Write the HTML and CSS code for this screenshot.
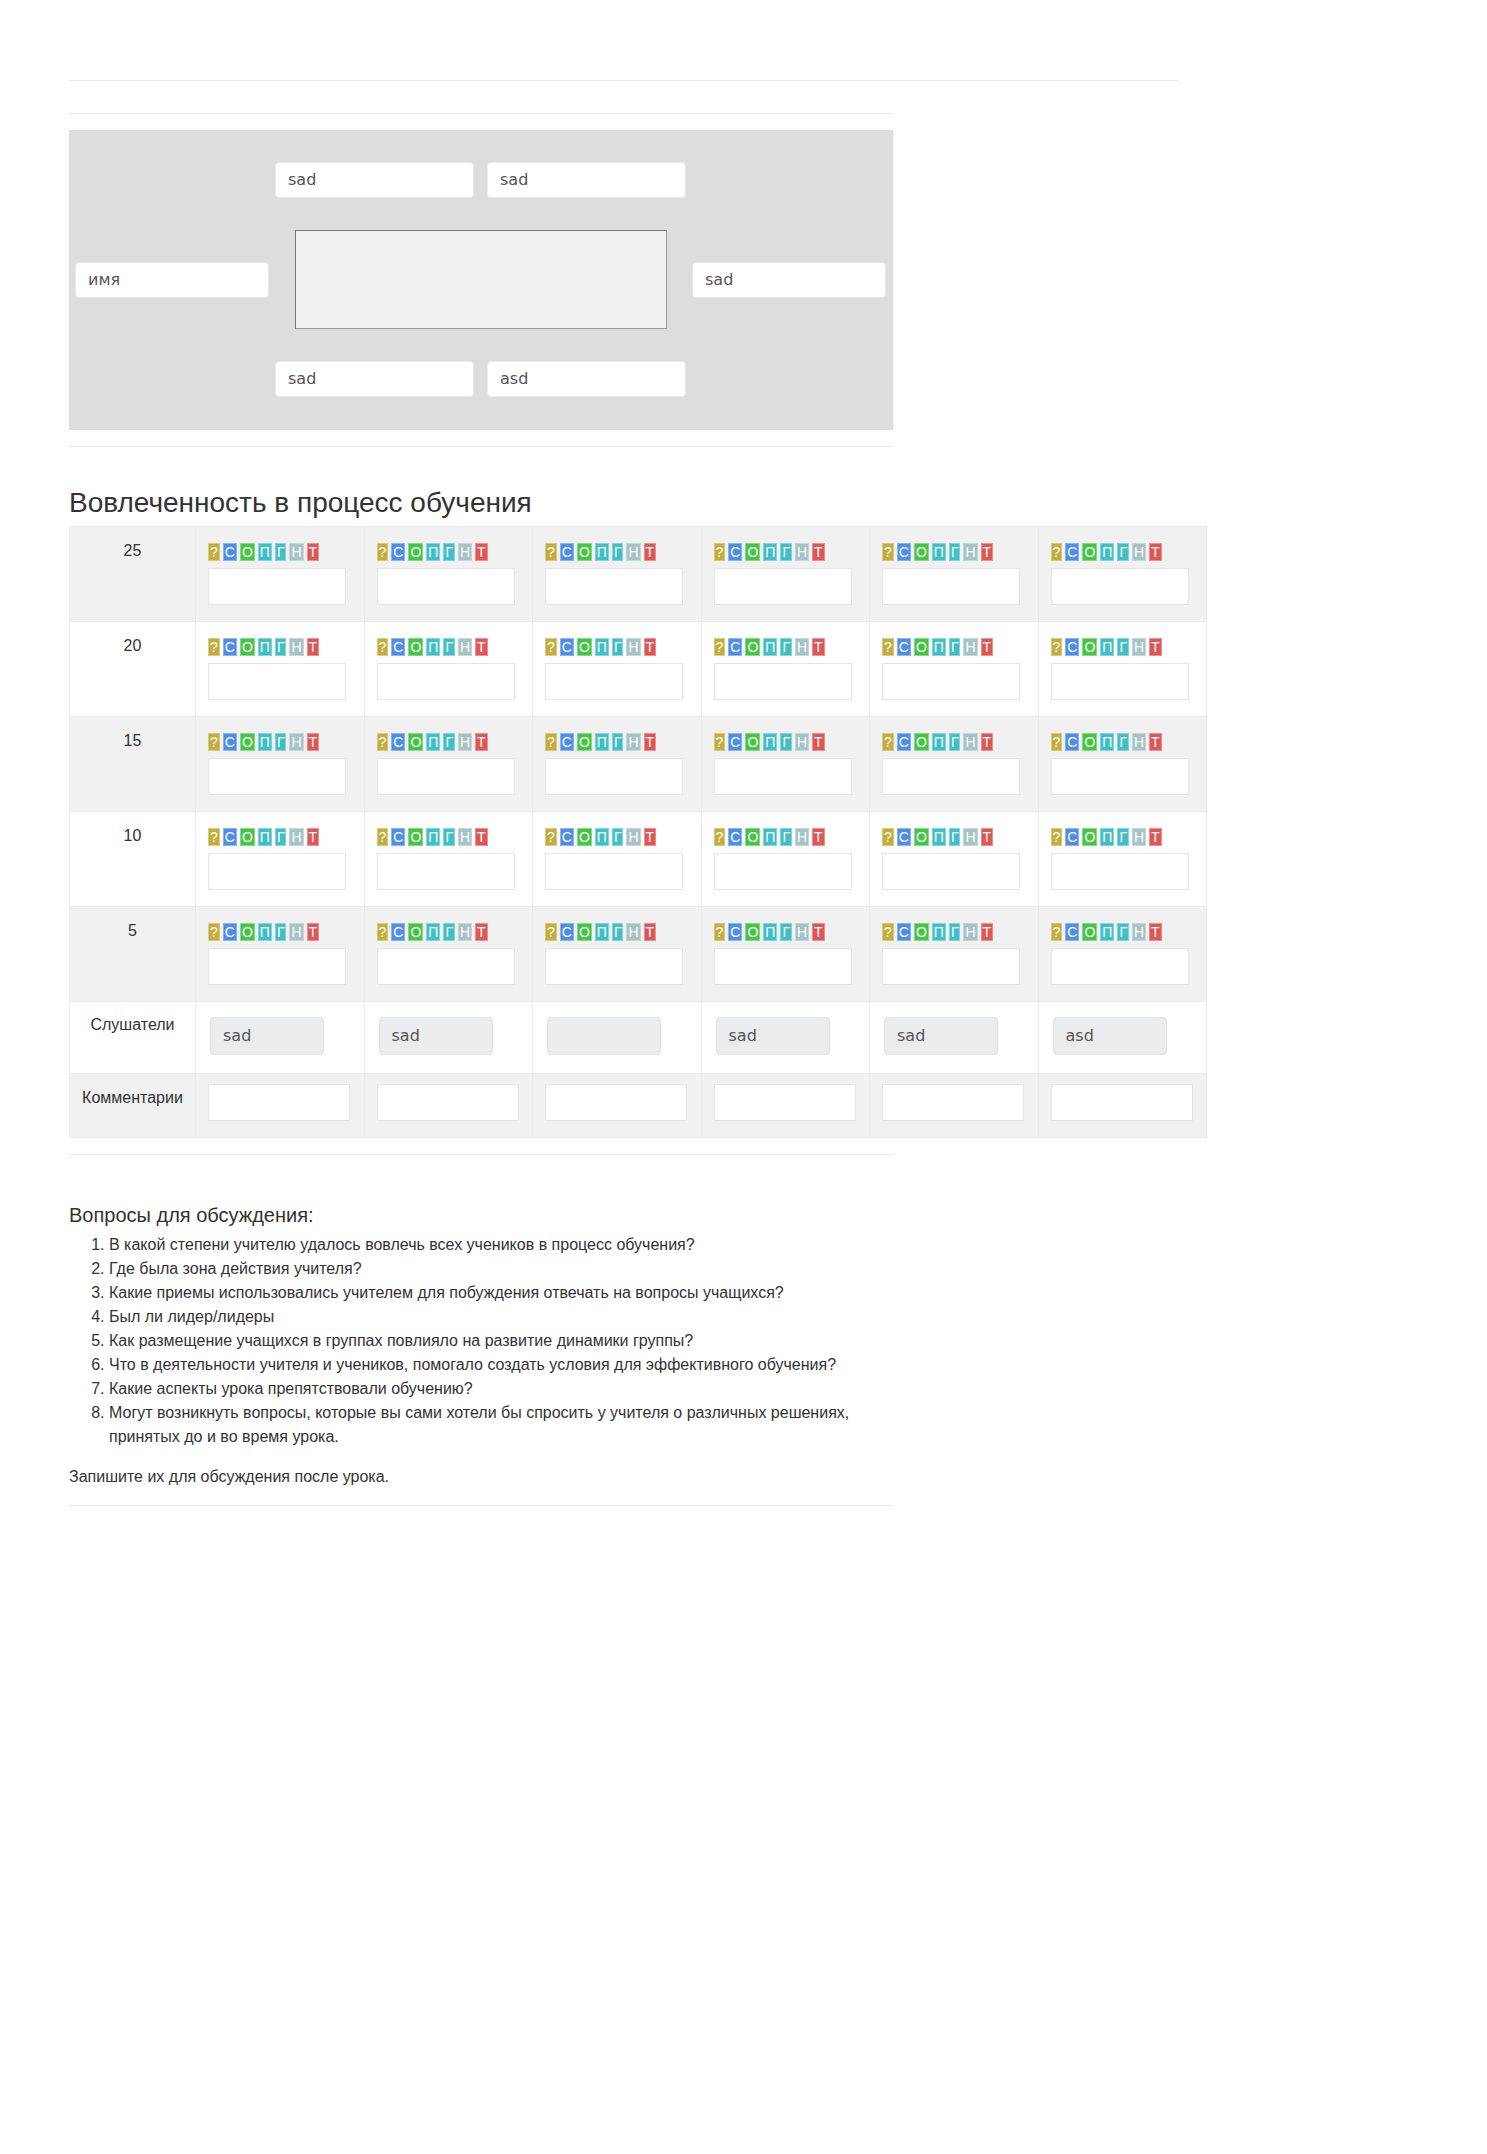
FILE: index.html
```html
<!DOCTYPE html>
<html lang="ru">
<head>
<meta charset="utf-8">
<title>Вовлеченность</title>
<link rel="stylesheet" href="styles.css">
</head>
<body>
<div class="page">
  <div class="rule rule-wide"></div>
  <div class="rule rule-narrow rule-2"></div>

  <div class="seating">
    <div class="seat-row seat-row-top">
      <div class="box">sad</div>
      <div class="box">sad</div>
    </div>
    <div class="seat-row seat-row-mid">
      <div class="box box-side box-left">имя</div>
      <div class="desk"></div>
      <div class="box box-side box-right">sad</div>
    </div>
    <div class="seat-row seat-row-bottom">
      <div class="box">sad</div>
      <div class="box">asd</div>
    </div>
  </div>

  <div class="rule rule-narrow rule-3"></div>

  <h3 class="title">Вовлеченность в процесс обучения</h3>

  <table class="grid">
    <colgroup>
      <col class="c-label">
      <col class="c-cell"><col class="c-cell"><col class="c-cell"><col class="c-cell"><col class="c-cell"><col class="c-cell">
    </colgroup>
    <tbody>
      <tr class="score-row odd">
        <td class="label">25</td>
        <td><div class="tags"><span class="tag t-q">?</span><span class="tag t-s">С</span><span class="tag t-o">О</span><span class="tag t-p">П</span><span class="tag t-g">Г</span><span class="tag t-n">Н</span><span class="tag t-t">Т</span></div><div class="field"></div></td>
        <td><div class="tags"><span class="tag t-q">?</span><span class="tag t-s">С</span><span class="tag t-o">О</span><span class="tag t-p">П</span><span class="tag t-g">Г</span><span class="tag t-n">Н</span><span class="tag t-t">Т</span></div><div class="field"></div></td>
        <td><div class="tags"><span class="tag t-q">?</span><span class="tag t-s">С</span><span class="tag t-o">О</span><span class="tag t-p">П</span><span class="tag t-g">Г</span><span class="tag t-n">Н</span><span class="tag t-t">Т</span></div><div class="field"></div></td>
        <td><div class="tags"><span class="tag t-q">?</span><span class="tag t-s">С</span><span class="tag t-o">О</span><span class="tag t-p">П</span><span class="tag t-g">Г</span><span class="tag t-n">Н</span><span class="tag t-t">Т</span></div><div class="field"></div></td>
        <td><div class="tags"><span class="tag t-q">?</span><span class="tag t-s">С</span><span class="tag t-o">О</span><span class="tag t-p">П</span><span class="tag t-g">Г</span><span class="tag t-n">Н</span><span class="tag t-t">Т</span></div><div class="field"></div></td>
        <td><div class="tags"><span class="tag t-q">?</span><span class="tag t-s">С</span><span class="tag t-o">О</span><span class="tag t-p">П</span><span class="tag t-g">Г</span><span class="tag t-n">Н</span><span class="tag t-t">Т</span></div><div class="field"></div></td>
      </tr>
      <tr class="score-row">
        <td class="label">20</td>
        <td><div class="tags"><span class="tag t-q">?</span><span class="tag t-s">С</span><span class="tag t-o">О</span><span class="tag t-p">П</span><span class="tag t-g">Г</span><span class="tag t-n">Н</span><span class="tag t-t">Т</span></div><div class="field"></div></td>
        <td><div class="tags"><span class="tag t-q">?</span><span class="tag t-s">С</span><span class="tag t-o">О</span><span class="tag t-p">П</span><span class="tag t-g">Г</span><span class="tag t-n">Н</span><span class="tag t-t">Т</span></div><div class="field"></div></td>
        <td><div class="tags"><span class="tag t-q">?</span><span class="tag t-s">С</span><span class="tag t-o">О</span><span class="tag t-p">П</span><span class="tag t-g">Г</span><span class="tag t-n">Н</span><span class="tag t-t">Т</span></div><div class="field"></div></td>
        <td><div class="tags"><span class="tag t-q">?</span><span class="tag t-s">С</span><span class="tag t-o">О</span><span class="tag t-p">П</span><span class="tag t-g">Г</span><span class="tag t-n">Н</span><span class="tag t-t">Т</span></div><div class="field"></div></td>
        <td><div class="tags"><span class="tag t-q">?</span><span class="tag t-s">С</span><span class="tag t-o">О</span><span class="tag t-p">П</span><span class="tag t-g">Г</span><span class="tag t-n">Н</span><span class="tag t-t">Т</span></div><div class="field"></div></td>
        <td><div class="tags"><span class="tag t-q">?</span><span class="tag t-s">С</span><span class="tag t-o">О</span><span class="tag t-p">П</span><span class="tag t-g">Г</span><span class="tag t-n">Н</span><span class="tag t-t">Т</span></div><div class="field"></div></td>
      </tr>
      <tr class="score-row odd">
        <td class="label">15</td>
        <td><div class="tags"><span class="tag t-q">?</span><span class="tag t-s">С</span><span class="tag t-o">О</span><span class="tag t-p">П</span><span class="tag t-g">Г</span><span class="tag t-n">Н</span><span class="tag t-t">Т</span></div><div class="field"></div></td>
        <td><div class="tags"><span class="tag t-q">?</span><span class="tag t-s">С</span><span class="tag t-o">О</span><span class="tag t-p">П</span><span class="tag t-g">Г</span><span class="tag t-n">Н</span><span class="tag t-t">Т</span></div><div class="field"></div></td>
        <td><div class="tags"><span class="tag t-q">?</span><span class="tag t-s">С</span><span class="tag t-o">О</span><span class="tag t-p">П</span><span class="tag t-g">Г</span><span class="tag t-n">Н</span><span class="tag t-t">Т</span></div><div class="field"></div></td>
        <td><div class="tags"><span class="tag t-q">?</span><span class="tag t-s">С</span><span class="tag t-o">О</span><span class="tag t-p">П</span><span class="tag t-g">Г</span><span class="tag t-n">Н</span><span class="tag t-t">Т</span></div><div class="field"></div></td>
        <td><div class="tags"><span class="tag t-q">?</span><span class="tag t-s">С</span><span class="tag t-o">О</span><span class="tag t-p">П</span><span class="tag t-g">Г</span><span class="tag t-n">Н</span><span class="tag t-t">Т</span></div><div class="field"></div></td>
        <td><div class="tags"><span class="tag t-q">?</span><span class="tag t-s">С</span><span class="tag t-o">О</span><span class="tag t-p">П</span><span class="tag t-g">Г</span><span class="tag t-n">Н</span><span class="tag t-t">Т</span></div><div class="field"></div></td>
      </tr>
      <tr class="score-row">
        <td class="label">10</td>
        <td><div class="tags"><span class="tag t-q">?</span><span class="tag t-s">С</span><span class="tag t-o">О</span><span class="tag t-p">П</span><span class="tag t-g">Г</span><span class="tag t-n">Н</span><span class="tag t-t">Т</span></div><div class="field"></div></td>
        <td><div class="tags"><span class="tag t-q">?</span><span class="tag t-s">С</span><span class="tag t-o">О</span><span class="tag t-p">П</span><span class="tag t-g">Г</span><span class="tag t-n">Н</span><span class="tag t-t">Т</span></div><div class="field"></div></td>
        <td><div class="tags"><span class="tag t-q">?</span><span class="tag t-s">С</span><span class="tag t-o">О</span><span class="tag t-p">П</span><span class="tag t-g">Г</span><span class="tag t-n">Н</span><span class="tag t-t">Т</span></div><div class="field"></div></td>
        <td><div class="tags"><span class="tag t-q">?</span><span class="tag t-s">С</span><span class="tag t-o">О</span><span class="tag t-p">П</span><span class="tag t-g">Г</span><span class="tag t-n">Н</span><span class="tag t-t">Т</span></div><div class="field"></div></td>
        <td><div class="tags"><span class="tag t-q">?</span><span class="tag t-s">С</span><span class="tag t-o">О</span><span class="tag t-p">П</span><span class="tag t-g">Г</span><span class="tag t-n">Н</span><span class="tag t-t">Т</span></div><div class="field"></div></td>
        <td><div class="tags"><span class="tag t-q">?</span><span class="tag t-s">С</span><span class="tag t-o">О</span><span class="tag t-p">П</span><span class="tag t-g">Г</span><span class="tag t-n">Н</span><span class="tag t-t">Т</span></div><div class="field"></div></td>
      </tr>
      <tr class="score-row odd">
        <td class="label">5</td>
        <td><div class="tags"><span class="tag t-q">?</span><span class="tag t-s">С</span><span class="tag t-o">О</span><span class="tag t-p">П</span><span class="tag t-g">Г</span><span class="tag t-n">Н</span><span class="tag t-t">Т</span></div><div class="field"></div></td>
        <td><div class="tags"><span class="tag t-q">?</span><span class="tag t-s">С</span><span class="tag t-o">О</span><span class="tag t-p">П</span><span class="tag t-g">Г</span><span class="tag t-n">Н</span><span class="tag t-t">Т</span></div><div class="field"></div></td>
        <td><div class="tags"><span class="tag t-q">?</span><span class="tag t-s">С</span><span class="tag t-o">О</span><span class="tag t-p">П</span><span class="tag t-g">Г</span><span class="tag t-n">Н</span><span class="tag t-t">Т</span></div><div class="field"></div></td>
        <td><div class="tags"><span class="tag t-q">?</span><span class="tag t-s">С</span><span class="tag t-o">О</span><span class="tag t-p">П</span><span class="tag t-g">Г</span><span class="tag t-n">Н</span><span class="tag t-t">Т</span></div><div class="field"></div></td>
        <td><div class="tags"><span class="tag t-q">?</span><span class="tag t-s">С</span><span class="tag t-o">О</span><span class="tag t-p">П</span><span class="tag t-g">Г</span><span class="tag t-n">Н</span><span class="tag t-t">Т</span></div><div class="field"></div></td>
        <td><div class="tags"><span class="tag t-q">?</span><span class="tag t-s">С</span><span class="tag t-o">О</span><span class="tag t-p">П</span><span class="tag t-g">Г</span><span class="tag t-n">Н</span><span class="tag t-t">Т</span></div><div class="field"></div></td>
      </tr>
      <tr class="listen-row">
        <td class="label label-listen">Слушатели</td>
        <td><div class="pill">sad</div></td>
        <td><div class="pill">sad</div></td>
        <td><div class="pill"></div></td>
        <td><div class="pill">sad</div></td>
        <td><div class="pill">sad</div></td>
        <td><div class="pill">asd</div></td>
      </tr>
      <tr class="comment-row odd">
        <td class="label">Комментарии</td>
        <td><div class="note"></div></td>
        <td><div class="note"></div></td>
        <td><div class="note"></div></td>
        <td><div class="note"></div></td>
        <td><div class="note"></div></td>
        <td><div class="note"></div></td>
      </tr>
    </tbody>
  </table>

  <div class="rule rule-narrow rule-4"></div>

  <div class="questions">
    <h4 class="q-title">Вопросы для обсуждения:</h4>
    <ol class="q-list">
      <li>В какой степени учителю удалось вовлечь всех учеников в процесс обучения?</li>
      <li>Где была зона действия учителя?</li>
      <li>Какие приемы использовались учителем для побуждения отвечать на вопросы учащихся?</li>
      <li>Был ли лидер/лидеры</li>
      <li>Как размещение учащихся в группах повлияло на развитие динамики группы?</li>
      <li>Что в деятельности учителя и учеников, помогало создать условия для эффективного обучения?</li>
      <li>Какие аспекты урока препятствовали обучению?</li>
      <li>Могут возникнуть вопросы, которые вы сами хотели бы спросить у учителя о различных решениях, принятых до и во время урока.</li>
    </ol>
    <p class="q-note">Запишите их для обсуждения после урока.</p>
  </div>

  <div class="rule rule-narrow rule-5"></div>
</div>
</body>
</html>
```

FILE: styles.css
```css
html, body {
  margin: 0;
  padding: 0;
  background: #ffffff;
}

body {
  font-family: "Liberation Sans", Arial, sans-serif;
  font-size: 16px;
  line-height: 24px;
  color: #333333;
}

.page {
  padding: 80px 0 600px 69px;
}

.rule {
  height: 0;
  border-top: 1px solid #e6e6e6;
}

.rule-wide { width: 1109px; }
.rule-narrow { width: 824px; }
.rule-2 { margin-top: 32px; }
.rule-3 { margin-top: 16px; }
.rule-4 { margin-top: 16px; }
.rule-5 { margin-top: 16px; }

/* seating plan */
.seating {
  width: 824px;
  height: 300px;
  box-sizing: border-box;
  margin-top: 16px;
  background: #dddddd;
  padding-top: 32px;
  display: flex;
  flex-direction: column;
}

.seat-row {
  display: flex;
  align-items: center;
}

.seat-row-top,
.seat-row-bottom {
  padding-left: 206px;
  gap: 13px;
}

.seat-row-mid {
  margin-top: 32px;
  margin-bottom: 32px;
}

.box {
  width: 199px;
  height: 36px;
  box-sizing: border-box;
  background: #ffffff;
  border: 1px solid #e9e9e9;
  border-radius: 4px;
  padding-left: 12px;
  font-family: "DejaVu Sans", sans-serif;
  font-size: 16px;
  line-height: 34px;
  color: #555555;
}

.box-side {
  width: 194px;
}

.box-left { margin-left: 6px; }

.desk {
  width: 372px;
  height: 99px;
  box-sizing: border-box;
  margin-left: 26px;
  background: #f0f0f0;
  border: 1px solid #7a7a7a;
  border-right-color: #9a9a9a;
  border-bottom-color: #9a9a9a;
}

.box-right { margin-left: 25px; }

/* heading */
.title {
  margin: 41px 0 8px 0;
  font-size: 28px;
  line-height: 30px;
  font-weight: normal;
  color: #333333;
}

/* table */
.grid {
  width: 1137px;
  table-layout: fixed;
  border-collapse: collapse;
}

.c-label { width: 126px; }
.c-cell { width: 168.5px; }

.grid td {
  border: 1px solid #ebebeb;
  vertical-align: top;
  padding: 16px 12px 16px 12px;
}

.grid tr.odd td {
  background: #f1f1f1;
}

.grid td.label {
  text-align: center;
  padding: 12px 4px 0 4px;
  font-size: 16px;
  line-height: 24px;
  color: #333333;
}

.grid td.label-listen {
  padding-top: 11px;
}

.tags {
  display: flex;
  gap: 3px;
  height: 18px;
}

.tag {
  display: block;
  height: 18px;
  box-sizing: border-box;
  padding: 0 1px;
  border: 1px solid rgba(255, 255, 255, 0.35);
  font-family: "Liberation Sans", Arial, sans-serif;
  font-size: 14px;
  line-height: 16px;
  color: #ffffff;
}

.t-q { background: #c4ae3b; }
.t-s { background: #4f8ee6; }
.t-o { background: #45c545; }
.t-p { background: #41bfc6; }
.t-g { background: #41bfc6; }
.t-n { background: #a6c3c5; }
.t-t { background: #de5656; }

.field {
  margin-top: 7px;
  width: 138px;
  height: 37px;
  box-sizing: border-box;
  background: #ffffff;
  border: 1px solid #e4e4e4;
}

.listen-row td {
  padding: 15px 14px 18px 14px;
}

.pill {
  width: 114px;
  height: 38px;
  box-sizing: border-box;
  background: #ebeced;
  border: 1px solid #e2e3e4;
  border-radius: 4px;
  padding-left: 12px;
  font-family: "DejaVu Sans", sans-serif;
  font-size: 16px;
  line-height: 36px;
  color: #555555;
}

.comment-row td {
  padding: 10px 12px 16px 12px;
}

.note {
  width: 142px;
  height: 37px;
  box-sizing: border-box;
  background: #ffffff;
  border: 1px solid #e4e4e4;
}

/* questions */
.questions {
  width: 824px;
}

.q-title {
  margin: 49px 0 0 0;
  font-size: 20px;
  line-height: 22px;
  font-weight: normal;
  color: #333333;
}

.q-list {
  margin: 7px 0 0 0;
  padding-left: 40px;
}

.q-list li {
  line-height: 24px;
}

.q-note {
  margin: 16px 0 0 0;
}
```
